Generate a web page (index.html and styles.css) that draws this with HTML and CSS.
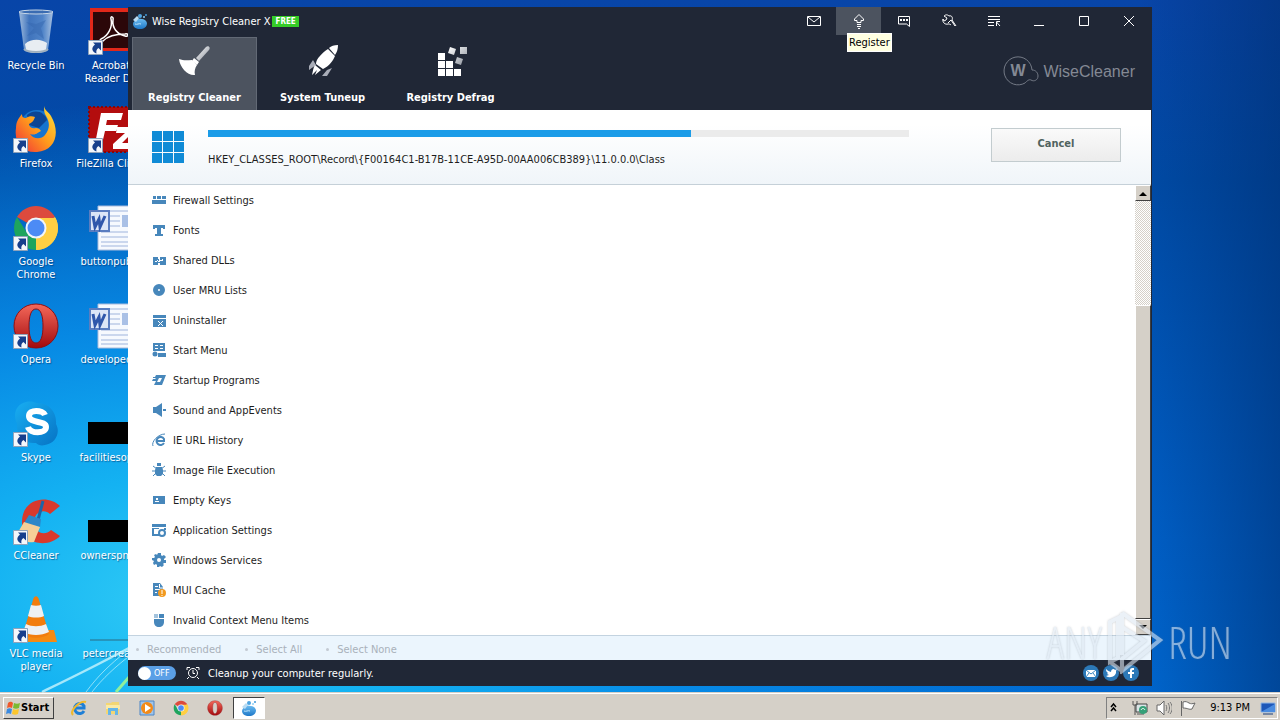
FILE: index.html
```html
<!DOCTYPE html>
<html lang="en">
<head>
    <meta charset="UTF-8">
    <meta name="viewport" content="width=device-width, initial-scale=1.0">
    <title>Wise Registry Cleaner X</title>
    <link rel="stylesheet" href="styles.css">
</head>
<body>
    <!-- Shared drawings -->
    <svg class="defs" aria-hidden="true">
        <defs>
            <linearGradient id="red" x1="0" y1="0" x2="0" y2="1"><stop offset="0" stop-color="#f4695a"/><stop offset="1" stop-color="#a30a0e"/></linearGradient>
            <linearGradient id="fox" x1="1" y1="0" x2="0" y2="1"><stop offset="0" stop-color="#ffe53b"/><stop offset=".5" stop-color="#ff9a1c"/><stop offset="1" stop-color="#f0283c"/></linearGradient>
            <linearGradient id="skype" x1="0" y1="0" x2="1" y2="1"><stop offset="0" stop-color="#18aef2"/><stop offset="1" stop-color="#0673c4"/></linearGradient>
            <linearGradient id="glass" x1="0" y1="0" x2="1" y2="0"><stop offset="0" stop-color="#b9cfe6"/><stop offset=".3" stop-color="#4a7cc0"/><stop offset=".7" stop-color="#5d8fce"/><stop offset="1" stop-color="#c3d6ea"/></linearGradient>
            <linearGradient id="drop" x1="0" y1="0" x2="0" y2="1"><stop offset="0" stop-color="#6cbcf0"/><stop offset="1" stop-color="#1e78c8"/></linearGradient>
            <linearGradient id="silver" x1="0" y1="0" x2="1" y2="1"><stop offset="0" stop-color="#ffffff"/><stop offset="1" stop-color="#8b919b"/></linearGradient>
        </defs>
        <symbol id="shortcut" viewBox="0 0 48 48">
            <path d="M1.500 32.500h14v14h-14z" fill="#f4f7fb" stroke="#8fa3bb"/>
            <path d="M6 34.500h8v8l-2.500-2.500c-2 1-2.500 3-2 5.500-5-2-5.500-6-1.500-9z" fill="#173f8c"/>
        </symbol>
        <symbol id="chrome" viewBox="0 0 48 48">
            <path d="M24 24 5 13A22 22 0 0 1 43 13z" fill="#dc4a3d"/>
            <path d="M24 24 43 13A22 22 0 0 1 24 46L16 28z" fill="#ffcf43"/>
            <path d="M24 46A22 22 0 0 1 5 13l10 16 9 5z" fill="#1ea45d"/>
            <path d="M24 14h19.500A22 22 0 0 1 24 46l9-16z" fill="#ffcf43"/>
            <circle cx="24" cy="24" r="10.500" fill="#f1f5fa"/>
            <circle cx="24" cy="24" r="8.500" fill="#4c8bf5"/>
        </symbol>
        <symbol id="opera" viewBox="0 0 48 48">
            <path fill-rule="evenodd" d="M24 2C11 2 2 12 2 24s9 22 22 22 22-10 22-22S37 2 24 2zm0 5c5 0 7 7 7 17s-2 17-7 17-7-7-7-17 2-17 7-17z" fill="url(#red)" stroke="#8e1014"/>
        </symbol>
        <symbol id="word" viewBox="0 0 48 48">
            <path d="M11 2h37v44H11z" fill="#f6f9fe" stroke="#a9bbdc"/>
            <path d="M23 7h25M23 12h10M23 17h10M23 22h10M14 28h34M14 33h34M14 38h34M14 42h34" stroke="#9fb4dc" stroke-width="1"/>
            <path d="M35 11h13v12H35z" fill="#a9c0e6"/>
            <path d="M3 7h19v20H3z" fill="#dce6f7" stroke="#5a7dc0" stroke-width="2"/>
            <path d="m6 12 2 11 4-8 1 8 5-11" fill="none" stroke="#2f57ab" stroke-width="3"/>
        </symbol>
        <symbol id="wise" viewBox="0 0 16 16">
            <path d="M5 6c2-1 3 0 5 0s4 1 5 4c0 4-3 6-7 6s-7-2-7-5c0-2 2-4 4-5z" fill="url(#drop)"/>
            <path d="m1 7 4-4 2 2-3 4z" fill="#b9dcf3"/>
            <circle cx="8" cy="3" r="2" fill="#4ea5e2"/>
            <circle cx="12" cy="4" r="1" fill="#8fd0f6"/>
            <path d="M3 11c2 1 4-1 6 0" fill="none" stroke="#bfe5fb"/>
            <circle cx="14" cy="2" r="1" fill="#3d97da"/>
        </symbol>
    </svg>

    <div class="screen">
        <!-- Desktop shortcuts -->
        <main class="desktop">
            <div class="shortcuts">
                <a class="shortcut" href="#bin">
                    <svg viewBox="0 0 48 48"><path d="M7 4h34l-5 38c-3 4-21 4-24 0z" fill="url(#glass)" opacity=".85"/><ellipse cx="24" cy="4" rx="17" ry="2" fill="#3a6cb2" stroke="#c9d8e8"/><path d="m14 14 8 6-7 8 9-3 8 6-3-11 5-8-10 4z" fill="#3567b0" opacity=".5"/><path d="M13 36c6-6 17-5 22-1l-1 7c-3 4-17 4-20 0z" fill="#e8edf2"/><path d="M12 41c4 4 20 4 24 0" fill="none" stroke="#9fb0bf" stroke-width="2"/></svg>
                    <span>Recycle Bin</span>
                </a>
                <a class="shortcut" href="#acrobat">
                    <svg viewBox="0 0 48 48"><path d="M3 0h45v43H3z" fill="#e1281a"/><path d="M6 4h42v36H6z" fill="#2b0709"/><path d="M14 31c7-3 12-12 10-20-1-3 3-3 2 1-1 8 4 14 12 16 4 1 4-3 0-2-8 0-17 2-22 7-2 2-5 0-2-2z" fill="none" stroke="#fff" stroke-width="1.500"/><use href="#shortcut"/></svg>
                    <span>Acrobat Reader DC</span>
                </a>
                <a class="shortcut" href="#firefox">
                    <svg viewBox="0 0 48 48"><circle cx="25" cy="21" r="17" fill="#1574cf"/><path d="M15 9c8-7 18-3 20 5l-8 8-10-3z" fill="#0c4594"/><path d="M32 0c1 5 4 5 7 10 10 17 4 35-14 36C9 47 2 36 4 22c0-6 2-9 6-14 0 3 1 4 4 4 3-2 6-2 9-1-1 3-2 5-6 7 0 3 3 5 7 4 2 0 4 1 5 3-3 1-5 5-11 3 3 5 11 6 15 1 5-6 5-13 1-19-2-3-2-6-2-10z" fill="url(#fox)"/><use href="#shortcut"/></svg>
                    <span>Firefox</span>
                </a>
                <a class="shortcut" href="#filezilla">
                    <svg viewBox="0 0 48 48"><path d="M2 1h46v45H2z" fill="#b30d0e" stroke="#8a0507" stroke-dasharray="2 2" stroke-width="2"/><path d="M14 7h22l-2 7H20l-1 5h12l-2 6H18l-3 13H8zM30 21h17v4L35 37h12v6H26v-5l12-11h-9z" fill="#fff"/><use href="#shortcut"/></svg>
                    <span class="nowrap">FileZilla Client</span>
                </a>
                <a class="shortcut" href="#chrome-app">
                    <svg viewBox="0 0 48 48"><use href="#chrome"/><use href="#shortcut"/></svg>
                    <span>Google Chrome</span>
                </a>
                <a class="shortcut" href="#doc1">
                    <svg viewBox="0 0 48 48"><use href="#word"/></svg>
                    <span>buttonpub...</span>
                </a>
                <a class="shortcut" href="#opera-app">
                    <svg viewBox="0 0 48 48"><use href="#opera"/><use href="#shortcut"/></svg>
                    <span>Opera</span>
                </a>
                <a class="shortcut" href="#doc2">
                    <svg viewBox="0 0 48 48"><use href="#word"/></svg>
                    <span>developed...</span>
                </a>
                <a class="shortcut" href="#skype-app">
                    <svg viewBox="0 0 48 48"><path d="M14 2c4-1 8 0 11 1 12 0 20 9 19 21 5 9-1 20-11 21-4 1-7 0-9-2C12 44 4 35 5 24 0 13 5 4 14 2z" fill="url(#skype)"/><path d="M33 15c-2-5-16-6-16 1 0 8 17 4 17 11s-16 7-18 0" fill="none" stroke="#fff" stroke-width="6"/><use href="#shortcut"/></svg>
                    <span>Skype</span>
                </a>
                <a class="shortcut" href="#file1">
                    <svg viewBox="0 0 48 48"><path d="M1 22h47v22H1z" fill="#000"/></svg>
                    <span>facilitiesop...</span>
                </a>
                <a class="shortcut" href="#ccleaner">
                    <svg viewBox="0 0 48 48"><path d="M48 8 38 16c-6-6-16-2-16 8s10 15 17 8l9 6C37 50 10 48 10 24S36-4 48 8z" fill="#d8392c"/><path d="m31 3-5 19" stroke="#1c65a8" stroke-width="3"/><path d="m17 17 12 4-1 8-16-4z" fill="#2d86c8"/><path d="M12 24 5 36c5 7 11 9 17 8l6-15z" fill="#f6cf98"/><use href="#shortcut"/></svg>
                    <span>CCleaner</span>
                </a>
                <a class="shortcut" href="#file2">
                    <svg viewBox="0 0 48 48"><path d="M1 22h47v22H1z" fill="#000"/></svg>
                    <span>ownerspm...</span>
                </a>
                <a class="shortcut" href="#vlc">
                    <svg viewBox="0 0 48 48"><path d="M9 34h33l3 12H8z" fill="#f58a12"/><path d="M21 4c1-5 5-5 6 0l10 34c-6 5-20 5-26 0z" fill="#f27c0c"/><path d="m19 9-3 11c4 2 12 2 16 0L29 9c-3 1-7 1-10 0zM14 28l-3 8c8 4 18 4 26 0l-3-8c-6 3-14 3-20 0z" fill="#eef0f2"/><use href="#shortcut"/></svg>
                    <span>VLC media player</span>
                </a>
                <a class="shortcut" href="#file3">
                    <svg viewBox="0 0 48 48"><path d="M3 44h45" stroke="#2a6c85"/></svg>
                    <span>petercrea...</span>
                </a>
            </div>

            <svg class="streaks" viewBox="0 0 200 120" aria-hidden="true"><path d="M42 94C75 78 100 66 140 44" stroke="#c8f4fd" stroke-width="2.500" fill="none" opacity=".8"/><path d="M86 94c12-16 22-26 42-42M92 94c10-13 24-26 40-38" stroke="#bdf1fb" fill="none" opacity=".7"/><path d="m116 94 14-16" stroke="#8ff09c" stroke-width="3"/></svg>

            <!-- Application window -->
            <section class="window">
                <header class="titlebar">
                    <svg class="app-icon" viewBox="0 0 16 16"><use href="#wise"/></svg>
                    <h1>Wise Registry Cleaner X</h1>
                    <span class="free">FREE</span>
                    <div class="tools">
                        <button aria-label="Mail"><svg viewBox="0 0 16 16"><path d="M1.500 3.500h13v9h-13zM2 4l6 5 6-5"/></svg></button>
                        <button class="hover" aria-label="Register"><svg viewBox="0 0 16 16"><path d="M6 9.500V7.500H3.500V6L8 1.500 12.500 6v1.500H10v2zM6 11.500h4M6 13.500h4M7 15.500h2"/></svg></button>
                        <button aria-label="Feedback"><svg viewBox="0 0 16 16"><path d="M2.500 3.500h11v10l-3-2.500h-8z"/><path d="M4 7h2M7 7h2M10 7h2" stroke-width="2"/></svg></button>
                        <button aria-label="Settings"><svg viewBox="0 0 16 16"><path d="M8 3C6 1 4 2 3 3l3 2-1 2-2 1-1-2c-1 3 2 6 5 5 1 0 2 0 3 1M8 3c3-1 4 2 3 4l4 6M7 10l3-3 4 6"/></svg></button>
                        <button aria-label="Menu"><svg viewBox="0 0 16 16"><path d="M2 3.500h12M2 6.500h12M2 9.500h6M2 12.500h6M10.500 13V8.500H14M10.500 9l3.500 4"/></svg></button>
                        <button aria-label="Minimize"><svg viewBox="0 0 16 16"><path d="M3 12.500h10"/></svg></button>
                        <button aria-label="Maximize"><svg viewBox="0 0 16 16"><path d="M3.500 3.500h9v9h-9z"/></svg></button>
                        <button aria-label="Close"><svg viewBox="0 0 16 16"><path d="m3 3 10 10M13 3 3 13"/></svg></button>
                        <span class="tooltip" role="tooltip">Register</span>
                    </div>
                </header>

                <div class="navbar">
                    <nav class="tabs">
                        <button class="tab active">
                            <svg viewBox="0 0 36 36"><path d="m19 15 10-11c2-2 5 0 3 3L22 18z" fill="url(#silver)"/><path d="m17 15 5 4-2 3-5-4z" fill="#fff"/><path d="M2 16c5 2 9 1 13 1l5 5c-2 3-3 6-2 10C11 33 3 25 2 16z" fill="#fff"/></svg>
                            Registry Cleaner
                        </button>
                        <button class="tab">
                            <svg viewBox="0 0 36 36"><path d="m8 17-4 6v4l7-5zM22 27l-5 6h5l5-8z" fill="#a9adb8"/><path d="M33 2c-4 0-7 1-9 3l6 7c2-3 3-6 3-10zM23 6C17 10 11 16 11 21l7 5c6-3 10-8 12-13zM10 22c-2 3-2 6-3 10l5-5-2 5 6-5z" fill="#fff"/></svg>
                            System Tuneup
                        </button>
                        <button class="tab">
                            <svg viewBox="0 0 36 36"><path d="M5 10h7v7H5zM5 18h7v7H5zM13 18h7v7h-7zM5 26h7v7H5zM13 26h7v7h-7zM21 26h7v7h-7z" fill="#fff"/><path d="m17 4 6 2-2 6-6-2zM24 14l6 2-2 6-6-2zM27 4h7v7h-7z" fill="url(#silver)"/></svg>
                            Registry Defrag
                        </button>
                    </nav>
                    <a class="brand" href="#wisecleaner">
                        <svg viewBox="0 0 36 32"><path d="M22 28A14 14 0 1 1 29 15c4 0 6 3 6 6 0 4-4 6-7 4-2-1-4 1-6 3" /><text x="15" y="21" text-anchor="middle">W</text></svg>
                        WiseCleaner
                    </a>
                </div>

                <div class="scan">
                    <svg class="blocks" viewBox="0 0 32 32"><path d="M0 0h10v10H0zM11 0h10v10H11zM22 0h10v10H22zM0 11h10v10H0zM11 11h10v10H11zM22 11h10v10H22zM0 22h10v10H0zM11 22h10v10H11zM22 22h10v10H22z" fill="#108bd6"/></svg>
                    <div class="scan-progress">
                        <progress value="689" max="1000" aria-label="Scan progress"></progress>
                        <p>HKEY_CLASSES_ROOT\Record\{F00164C1-B17B-11CE-A95D-00AA006CB389}\11.0.0.0\Class</p>
                    </div>
                    <button class="cancel">Cancel</button>
                </div>

                <div class="results">
                    <ul class="items">
                        <li><svg viewBox="0 0 14 14"><path d="M1 3h3v3H1zM5 3h4v3H5zM10 3h4v3h-4zM0 7h14v4H0z"/></svg>Firewall Settings</li>
                        <li><svg viewBox="0 0 14 14"><path d="M1 2h12v4h-2V5H9v6h2v2H3v-2h2V5H3v1H1z"/></svg>Fonts</li>
                        <li><svg viewBox="0 0 14 14"><path fill-rule="evenodd" d="M1 4h5v2h2V4h6v8H8v-2H6v2H1zM3 8v1h2V7h1v2h2V7h2v1h1V6h-1v2H8V6H7v2z"/></svg>Shared DLLs</li>
                        <li><svg viewBox="0 0 14 14"><path fill-rule="evenodd" d="M7 1a6 6 0 1 1 0 12A6 6 0 1 1 7 1zm0 5a1 1 0 1 0 0 2 1 1 0 0 0 0-2z"/></svg>User MRU Lists</li>
                        <li><svg viewBox="0 0 14 14"><path d="M1 2h13v3H1zM1 6h13v8H1z"/><path class="cut" d="m6 8 5 5M11 8l-5 5"/></svg>Uninstaller</li>
                        <li><svg viewBox="0 0 14 14"><path d="M1 0h12v8H1zM6 10h8v4H6z"/><circle cx="3" cy="11" r="2.500"/><path class="cut" d="M3 2.500h3M3 5.500h3M8 2.500h3M8 5.500h3"/></svg>Start Menu</li>
                        <li><svg viewBox="0 0 14 14"><path fill-rule="evenodd" d="M4 2h10l-4 10H2l2-4H0l1-2h2L4 5H1V4h2zm3 3L5 9h3l2-4z"/></svg>Startup Programs</li>
                        <li><svg viewBox="0 0 14 14"><path d="M1 4h3l6-4v14l-6-4H1zM11 6h3v2h-3z"/></svg>Sound and AppEvents</li>
                        <li><svg viewBox="0 0 14 14"><path d="M12 10a4 4 0 1 1 0-4v2H5" fill="none" stroke="#4787bb" stroke-width="2"/><path d="M1 13C-1 9 6 1 13 1" fill="none" stroke="#4787bb"/></svg>IE URL History</li>
                        <li><svg viewBox="0 0 14 14"><path d="M5 3V0h4v3zM4 4h6l1 3v4l-2 2H5l-2-2V7z"/><path d="m1 3 4 3M13 3 9 6M0 8h14M1 13l4-4M13 13 9 9" stroke="#4787bb"/></svg>Image File Execution</li>
                        <li><svg viewBox="0 0 14 14"><path d="M1 3h12v8H1z"/><path d="M4 5h2v2H4zM3 8h4v1H3z" fill="#fff"/></svg>Empty Keys</li>
                        <li><svg viewBox="0 0 14 14"><path d="M0 1h14v3H0zM0 5h2v6h5v2H0zM2 5h5v1H2zM12 5h2v2h-2z"/><circle cx="10" cy="10" r="3" fill="none" stroke="#4787bb" stroke-width="2"/></svg>Application Settings</li>
                        <li><svg viewBox="0 0 14 14"><path fill-rule="evenodd" d="M6 0h3v2l1 1 2-1 2 2-2 2v1h2v3h-2l-1 1 1 1-2 2-2-1-1 1H5v-2l-1-1-2 1-1-2 1-2-2-1V5h2l1-1-1-2 2-1 1 1zm1 5a2 2 0 1 0 0 4 2 2 0 0 0 0-4z"/></svg>Windows Services</li>
                        <li><svg viewBox="0 0 14 14"><path d="M1 0h7l3 4v9H1z"/><path class="cut" d="M3 3.500h3M3 6.500h5M3 9.500h2M7.500 1v4H11"/><circle cx="10" cy="10" r="4" fill="#f29a20"/><path d="M10 7v4M10 12v1" stroke="#fff"/></svg>MUI Cache</li>
                        <li><svg viewBox="0 0 14 14"><path d="M2 1h4v4H2z" opacity=".5"/><path d="M7 1h5v4H7zM2 6h10v3c0 3-2 5-5 5s-5-2-5-5z"/></svg>Invalid Context Menu Items</li>
                    </ul>
                    <div class="scrollbar">
                        <button aria-label="Scroll up">
                            <svg viewBox="0 0 8 5"><path d="M0 5h8L4 1z"/></svg>
                        </button>
                        <div class="track"></div>
                        <div class="thumb"></div>
                        <button aria-label="Scroll down">
                            <svg viewBox="0 0 8 5"><path d="M0 0h8L4 4z"/></svg>
                        </button>
                    </div>
                </div>

                <div class="select-bar">
                    <button>Recommended</button>
                    <button>Select All</button>
                    <button>Select None</button>
                </div>

                <footer class="status">
                    <label class="toggle"><input type="checkbox"><span>OFF</span></label>
                    <svg class="alarm" viewBox="0 0 14 14"><circle cx="7" cy="7" r="4.500"/><path d="M7 4v3.500h2M1 4V1.500h3M13 4V1.500h-3M3 11l-2 2M11 11l2 2"/></svg>
                    <p>Cleanup your computer regularly.</p>
                    <div class="social">
                        <a href="#mail" aria-label="Mail"><svg viewBox="0 0 16 16"><path d="M3 5h10v7H3z" fill="#fff"/><path d="m3 5 5 4 5-4M3 12l3-4M13 12l-3-4" fill="none" stroke="#3b87c0"/></svg></a>
                        <a href="#twitter" aria-label="Twitter"><svg viewBox="0 0 16 16"><path d="M3 4c2 2 3 2 5 3 0-3 3-4 4-2l2-1-1 2c1 5-6 8-10 5l3-1-2-1 1-1c-2-1-2-3-2-4z" fill="#fff"/></svg></a>
                        <a href="#facebook" aria-label="Facebook"><svg viewBox="0 0 16 16"><path d="M7 13V9H5V7h2V5c0-2 2-2 4-2v2c-2 0-2 0-2 2h2v2H9v4z" fill="#fff"/></svg></a>
                    </div>
                </footer>
            </section>
        </main>

        <!-- Taskbar -->
        <footer class="taskbar">
            <button class="start">
                <svg viewBox="0 0 16 16"><path d="M3 3c2-2 4-1 5 0L7 8C5 7 4 7 2 8z" fill="#f0582a"/><path d="M9 3c2 1 4 1 6 0l-1 5c-2 1-4 1-6 0z" fill="#7cba32"/><path d="M2 9c2-1 3-1 5 0l-1 5c-2-1-3-1-5 0z" fill="#3a8ae0"/><path d="M8 9c2 1 3 1 6 0l-1 5c-2 1-4 1-6 0z" fill="#fcc62c"/></svg>
                Start
            </button>
            <div class="quick">
                <button aria-label="Internet Explorer"><svg viewBox="0 0 16 16"><path d="M13 11a5 5 0 1 1 0-5v2H5" fill="none" stroke="#1f7fd6" stroke-width="3"/><path d="M2 15C-2 11 9 0 15 2" fill="none" stroke="#f0b92e" stroke-width="2"/></svg></button>
                <button aria-label="Explorer"><svg viewBox="0 0 16 16"><path d="M1 3h5l1-1h7v12H1z" fill="#f3d673"/><path d="M1 5h14v4H1z" fill="#fbeaa4"/><path d="M3 8h10v7h-3v-4H6v4H3z" fill="#66b6e8"/></svg></button>
                <button aria-label="Media Player"><svg viewBox="0 0 16 16"><path d="M1 1h14v14H1z" fill="#9fc4ea" stroke="#4c86c6"/><circle cx="8" cy="8" r="6" fill="#f28a18"/><path d="m6 4 6 4-6 4z" fill="#fff"/></svg></button>
                <button aria-label="Chrome"><svg viewBox="0 0 48 48"><use href="#chrome"/></svg></button>
                <button aria-label="Opera"><svg viewBox="0 0 48 48"><use href="#opera"/></svg></button>
                <button class="pressed" aria-label="Wise Registry Cleaner X"><svg viewBox="0 0 16 16"><use href="#wise"/></svg></button>
            </div>
            <div class="tray">
                <svg viewBox="0 0 16 16"><path d="m3 7 2.500-3L8 7M3 11l2.500-3L8 11" fill="none" stroke="#000" stroke-width="1.500"/></svg>
                <svg viewBox="0 0 16 16"><path d="M4 4h11v8H4z" fill="#d9e4e6" stroke="#444"/><path d="M1 1v4h4V1M3 5v10M5 14h7" fill="none" stroke="#555"/><circle cx="11" cy="10" r="4" fill="#35a078"/><path d="M9 10c1-2 3-2 4 0" stroke="#fff" fill="none"/></svg>
                <svg viewBox="0 0 16 16"><path d="M1 5h3l4-4v14l-4-4H1z" fill="#fff" stroke="#666"/><path d="M10 5c1 2 1 4 0 6M12 3c2 3 2 7 0 10M14 2c3 4 3 8 0 12" fill="none" stroke="#777"/></svg>
                <svg viewBox="0 0 16 16"><path d="M1.500 1v15M3 2c3-1 4 0 6 1s3 1 6 0l-3 6c-3 1-4-1-9-1z" fill="#fff" stroke="#666"/></svg>
                <time>9:13 PM</time>
                <svg viewBox="0 0 16 16"><path d="M1 3h14v9H1z" fill="#1d57b8" stroke="#8fb5e4"/><path d="M1 12 15 4v8z" fill="#4a8ce0"/><path d="M3 14h10" stroke="#173c7c"/></svg>
            </div>
        </footer>

        <div class="watermark">
            <span>ANY</span>
            <svg viewBox="0 0 58 64"><path d="M12 8 4 12v40l8-4zM16 3v42M16 3l38 27-38 31V49l22-18-22-14" /><path d="M4 52l12 9" /></svg>
            <span>RUN</span>
        </div>
    </div>
</body>
</html>
```
FILE: styles.css
```css
* {
    box-sizing: border-box;
}
body {
    margin: 0;
    font-family: Tahoma, "DejaVu Sans Condensed", "DejaVu Sans", sans-serif;
    font-size: 11px;
    line-height: 13px;
    color: #1d1d1d;
}
h1, p, ul {
    margin: 0;
    padding: 0;
}
button {
    font: inherit;
    color: inherit;
    padding: 0;
    border: none;
    background: none;
}
a {
    color: inherit;
    text-decoration: none;
}
svg {
    display: block;
    flex: none;
}
.defs {
    position: absolute;
    width: 0;
    height: 0;
}
.screen {
    position: relative;
    display: flex;
    flex-direction: column;
    height: 100vh;
    overflow: hidden;
    background:
        linear-gradient(90deg, rgba(0, 50, 120, 0) 89%, rgba(0, 45, 110, 0.55) 100%),
        radial-gradient(ellipse 900px 500px at 200px 600px, #32cdf6 0%, #14b2f2 25%, rgba(8, 145, 235, 0.85) 55%, rgba(8, 90, 200, 0) 100%),
        linear-gradient(180deg, #0845a8 0%, #004ba6 25%, #0060c8 75%, #0068d0 100%);
}

/* Desktop */
.desktop {
    position: relative;
    flex: 1;
    min-height: 0;
}
.shortcuts {
    display: grid;
    grid-template-columns: 72px 72px;
    grid-auto-rows: 98px;
    column-gap: 3px;
    padding-top: 8px;
}
.shortcut {
    display: flex;
    flex-direction: column;
    align-items: center;
    gap: 3px;
    color: #fff;
    text-align: center;
    text-shadow: 1px 1px 1px rgba(0, 30, 80, 0.5);
}
.shortcut svg {
    width: 48px;
    height: 48px;
}
.shortcut span {
    max-width: 68px;
}
.shortcut .nowrap {
    white-space: nowrap;
    max-width: none;
}
.streaks {
    position: absolute;
    left: 0;
    bottom: -26px;
    width: 200px;
    height: 120px;
}

/* Window */
.window {
    position: absolute;
    top: 7px;
    left: 10%;
    right: 10%;
    bottom: 6px;
    display: flex;
    flex-direction: column;
    background: #fff;
    border-right: 1px solid #202736;
}
.titlebar {
    display: flex;
    align-items: center;
    height: 28px;
    padding-left: 4px;
    background: #202736;
    color: #fff;
}
.app-icon {
    width: 16px;
    height: 16px;
}
.titlebar h1 {
    margin: 0 2px 0 4px;
    font-size: 11px;
    font-weight: normal;
}
.free {
    padding: 0 3px;
    background: #35cc28;
    font-size: 8px;
    font-weight: bold;
    line-height: 11px;
}
.tools {
    position: relative;
    display: flex;
    margin-left: auto;
}
.tools button {
    display: flex;
    align-items: center;
    justify-content: center;
    width: 45px;
    height: 28px;
}
.tools .hover {
    background: #4c535f;
}
.tools svg {
    width: 16px;
    height: 16px;
    fill: none;
    stroke: #fff;
}
.tooltip {
    position: absolute;
    top: 26px;
    left: 56px;
    z-index: 1;
    padding: 2px 1px;
    border: 1px solid #fff;
    background: #ffffe1;
    color: #000;
}
.navbar {
    display: flex;
    justify-content: space-between;
    height: 75px;
    padding: 2px 16px 0 4px;
    background: #202736;
    color: #fff;
}
.tabs {
    display: flex;
    gap: 3px;
}
.tab {
    display: flex;
    flex-direction: column;
    align-items: center;
    gap: 12px;
    width: 125px;
    padding-top: 5px;
    border: 1px solid transparent;
    border-bottom: none;
    font-weight: bold;
}
.tab.active {
    border-color: #626975;
    background: #4c535f;
}
.tab svg {
    width: 36px;
    height: 36px;
}
.brand {
    display: flex;
    align-items: center;
    gap: 4px;
    height: 68px;
    font-family: "Liberation Sans", Arial, sans-serif;
    font-size: 16px;
    color: #848994;
}
.brand svg {
    width: 36px;
    height: 32px;
    fill: none;
    stroke: #747a86;
}
.brand text {
    fill: #848994;
    stroke: none;
    font-size: 16px;
    font-weight: bold;
}

/* Scan progress */
.scan {
    display: flex;
    align-items: flex-start;
    height: 75px;
    padding: 18px 30px 0 24px;
    border-bottom: 1px solid #c5d0d8;
    background: linear-gradient(#fff 20%, #f0f5f9);
}
.blocks {
    width: 32px;
    height: 32px;
    margin-top: 3px;
}
.scan-progress {
    flex: 1;
    margin: 2px 82px 0 24px;
}
.scan-progress progress {
    display: block;
    width: 100%;
    height: 7px;
    border: none;
    appearance: none;
}
.scan-progress progress::-webkit-progress-bar {
    background: #ebebeb;
}
.scan-progress progress::-webkit-progress-value {
    background: #1b9ce8;
}
.scan-progress p {
    margin-top: 16px;
}
.cancel {
    width: 130px;
    height: 34px;
    padding-bottom: 4px;
    border: 1px solid #c3cccf;
    background: linear-gradient(#fafafa, #ececec);
    color: #50635f;
    font-weight: bold;
}

/* Result list */
.results {
    display: flex;
    flex: 1;
    min-height: 0;
}
.items {
    flex: 1;
    list-style: none;
}
.items li {
    display: flex;
    align-items: center;
    gap: 7px;
    height: 30px;
    padding-left: 24px;
}
.items svg {
    width: 14px;
    height: 14px;
    fill: #4787bb;
}
.items .cut {
    fill: none;
    stroke: #fff;
}
.scrollbar {
    display: flex;
    flex-direction: column;
    width: 16px;
}
.scrollbar button, .thumb {
    border: 1px solid;
    border-color: #fff #404040 #404040 #fff;
    background: #d5d0c8;
}
.scrollbar button {
    display: flex;
    align-items: center;
    justify-content: center;
    height: 16px;
}
.scrollbar svg {
    width: 8px;
    height: 5px;
}
.track {
    flex: 25;
    background: repeating-conic-gradient(#fff 0 25%, #d5d0c8 0 50%) 0 0 / 2px 2px;
}
.thumb {
    flex: 75;
}

.select-bar {
    display: flex;
    align-items: center;
    gap: 24px;
    height: 25px;
    padding: 2px 8px 0;
    border-top: 1px solid #c3d3e0;
    background: #ebf5fd;
    color: #a9b1ba;
}
.select-bar button {
    display: flex;
    align-items: center;
    gap: 8px;
}
.select-bar button::before {
    content: "";
    width: 3px;
    height: 3px;
    border-radius: 50%;
    background: #c3cad2;
}
.status {
    display: flex;
    align-items: center;
    height: 26px;
    padding: 0 12px 0 10px;
    background: #202736;
    color: #fff;
}
.toggle {
    display: flex;
    align-items: center;
    gap: 3px;
    width: 38px;
    height: 14px;
    border-radius: 7px;
    background: #5b9fe6;
    font-size: 9px;
}
.toggle input {
    width: 13px;
    height: 13px;
    margin: 0;
    border-radius: 50%;
    background: #fff;
    appearance: none;
}
.alarm {
    width: 14px;
    height: 14px;
    margin: 0 8px 0 10px;
    fill: none;
    stroke: #fff;
}
.social {
    display: flex;
    gap: 4px;
    margin-left: auto;
}
.social svg {
    width: 16px;
    height: 16px;
    border-radius: 50%;
    background: #2c79b8;
}

/* Taskbar */
.taskbar {
    display: flex;
    align-items: center;
    height: 28px;
    padding: 2px 2px 0 3px;
    border-top: 1px solid #d5d0c8;
    background: #d5d0c8;
    box-shadow: inset 0 1px #fff;
    color: #000;
}
.start {
    display: flex;
    align-items: center;
    height: 22px;
    padding: 0 4px 0 1px;
    border: 1px solid;
    border-color: #fff #404040 #404040 #fff;
    font-weight: bold;
}
.start svg, .quick svg, .tray svg {
    width: 16px;
    height: 16px;
}
.quick {
    display: flex;
    gap: 2px;
    margin-left: 9px;
}
.quick button {
    display: flex;
    align-items: center;
    justify-content: center;
    width: 32px;
    height: 22px;
}
.quick .pressed {
    border: 1px solid;
    border-color: #404040 #fff #fff #404040;
    background: #fff;
}
.tray {
    display: flex;
    align-items: center;
    gap: 8px;
    height: 22px;
    margin-left: auto;
    padding: 0 1px;
    border: 1px solid;
    border-color: #808080 #fff #fff #808080;
}
.tray time {
    margin: 0 2px 0 6px;
}

.watermark {
    position: absolute;
    right: 48px;
    bottom: 46px;
    display: flex;
    align-items: center;
    gap: 4px;
    color: #dfe8f2;
    font-family: "Open Sans Condensed Light", "Noto Sans ExtraCondensed Light", "Noto Sans ExtraCondensed", "Liberation Sans Narrow", sans-serif;
    font-size: 44px;
    font-weight: 300;
    line-height: 64px;
    text-shadow: 0 0 2px rgba(110, 120, 130, 0.6);
    opacity: 0.6;
    pointer-events: none;
}
.watermark svg {
    width: 58px;
    height: 64px;
    fill: none;
    stroke: #dfe8f2;
    stroke-width: 4;
    filter: drop-shadow(0 0 1px rgba(110, 120, 130, 0.6));
}
```
